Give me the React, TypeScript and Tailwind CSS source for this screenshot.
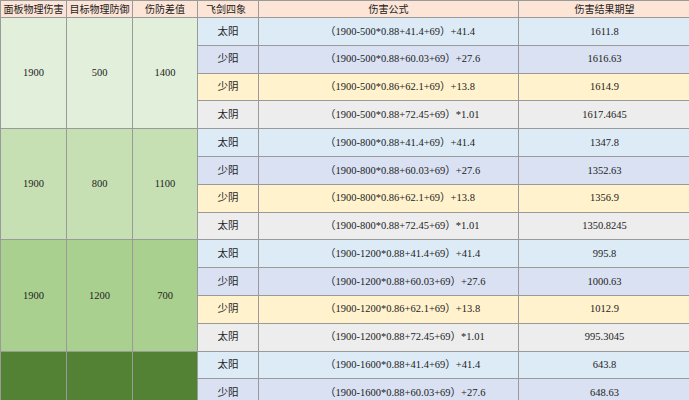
const groups = [
  { a: '1900', b: '500', c: '1400', bg: 'bg-[#e2efda]', d: '500', r: ['1611.8', '1616.63', '1614.9', '1617.4645'] },
  { a: '1900', b: '800', c: '1100', bg: 'bg-[#c6e0b4]', d: '800', r: ['1347.8', '1352.63', '1356.9', '1350.8245'] },
  { a: '1900', b: '1200', c: '700', bg: 'bg-[#a9d08e]', d: '1200', r: ['995.8', '1000.63', '1012.9', '995.3045'] },
  { a: '', b: '', c: '', bg: 'bg-[#548235]', d: '1600', r: ['643.8', '648.63', '660.9', '643.3045'] },
]

const kinds = [
  { n: '太阳', bg: 'bg-[#ddebf7]', f: (d: string) => `（1900-${d}*0.88+41.4+69）+41.4` },
  { n: '少阳', bg: 'bg-[#d9e1f2]', f: (d: string) => `（1900-${d}*0.88+60.03+69）+27.6` },
  { n: '少阴', bg: 'bg-[#fff2cc]', f: (d: string) => `（1900-${d}*0.86+62.1+69）+13.8` },
  { n: '太阴', bg: 'bg-[#ededed]', f: (d: string) => `（1900-${d}*0.88+72.45+69）*1.01` },
]

export default function App() {
  const cell = 'border border-[#9a9a9a] text-center p-0 whitespace-nowrap overflow-hidden'
  return (
    <div className="w-[689px] h-[400px] overflow-hidden bg-white text-[10.5px] text-[#222]" style={{ fontFamily: '"Liberation Serif", "Noto Sans CJK SC", serif' }}>
      <table className="border-collapse table-fixed w-[690px]">
        <colgroup>
          <col className="w-[66px]" />
          <col className="w-[66px]" />
          <col className="w-[65px]" />
          <col className="w-[61px]" />
          <col className="w-[260px]" />
          <col className="w-[172px]" />
        </colgroup>
        <tbody>
          <tr className="h-[17px] bg-[#fce4d6] text-[10px] leading-[15px]">
            <td className={cell}>面板物理伤害</td>
            <td className={cell}>目标物理防御</td>
            <td className={cell}>伤防差值</td>
            <td className={`${cell} text-left pl-2`}>飞剑四象</td>
            <td className={cell}>伤害公式</td>
            <td className={cell}>伤害结果期望</td>
          </tr>
          {groups.flatMap((g, gi) =>
            kinds.map((k, i) => (
              <tr key={`${gi}-${i}`} className="h-[27.8px]">
                {i === 0 && (
                  <>
                    <td rowSpan={4} className={`${cell} ${g.bg} border-[#4a4a4a]`}>{g.a}</td>
                    <td rowSpan={4} className={`${cell} ${g.bg} border-[#4a4a4a]`}>{g.b}</td>
                    <td rowSpan={4} className={`${cell} ${g.bg} border-[#4a4a4a]`}>{g.c}</td>
                  </>
                )}
                <td className={`${cell} ${k.bg}`}>{k.n}</td>
                <td className={`${cell} ${k.bg} text-left pl-[66px]`}>{k.f(g.d)}</td>
                <td className={`${cell} ${k.bg}`}>{g.r[i]}</td>
              </tr>
            ))
          )}
        </tbody>
      </table>
    </div>
  )
}
